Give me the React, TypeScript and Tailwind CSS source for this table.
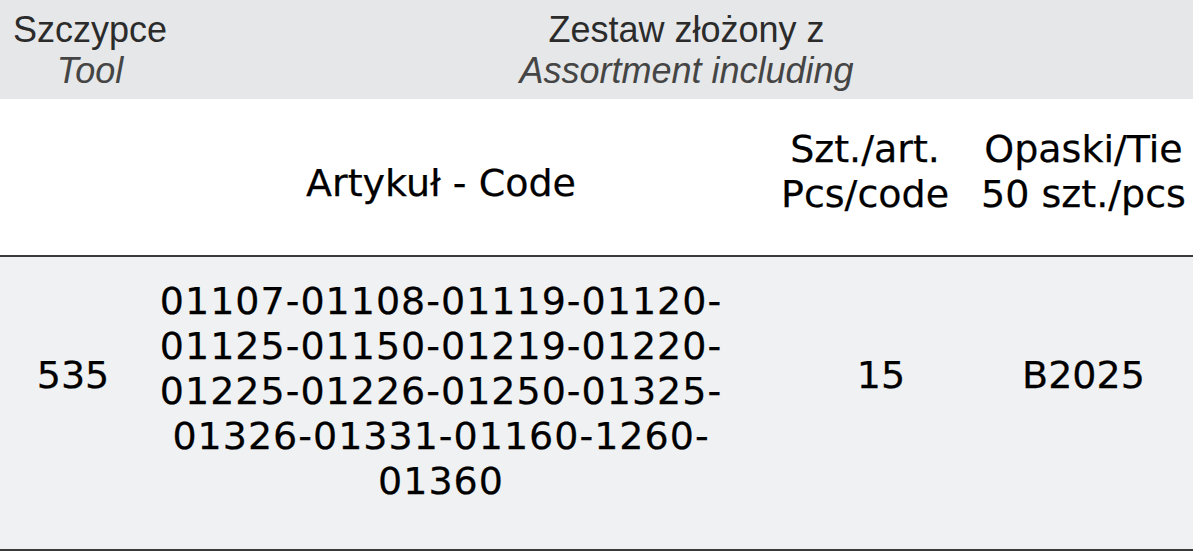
const codeLines = [
  '01107-01108-01119-01120-',
  '01125-01150-01219-01220-',
  '01225-01226-01250-01325-',
  '01326-01331-01160-1260-',
  '01360',
];

const verdana = "font-['DejaVu_Sans',Verdana,sans-serif]";

export default function App() {
  return (
    <div className="w-[1196px] h-[552px] bg-white overflow-hidden">
      <div className="w-[1193px]">
        {/* top band */}
        <div className="h-[99px] bg-[#e6e7e8] flex pt-[9px] font-['Liberation_Sans',Arial,sans-serif] text-[36px] leading-[41px]">
          <div className="w-[180px] flex flex-col items-center">
            <span className="text-[#2b2b2b]">Szczypce</span>
            <span className="italic text-[#454545]">Tool</span>
          </div>
          <div className="flex-1 flex flex-col items-center">
            <span className="text-[#2b2b2b]">Zestaw złożony z</span>
            <span className="italic text-[#454545]">Assortment including</span>
          </div>
        </div>

        {/* column headings */}
        <div
          className={`h-[158px] grid grid-cols-[146px_590px_238px_219px] border-b-2 border-[#3a3a3a] text-[38px] leading-[45px] text-black [-webkit-text-stroke:0.25px_black] ${verdana}`}
        >
          <div />
          <div className="pt-[62px] text-center">Artykuł - Code</div>
          <div className="pt-[28px] pl-[20px] text-center whitespace-nowrap">
            <div>Szt./art.</div>
            <div>Pcs/code</div>
          </div>
          <div className="pt-[28px] text-center whitespace-nowrap">
            <div>Opaski/Tie</div>
            <div>50 szt./pcs</div>
          </div>
        </div>

        {/* data row */}
        <div
          className={`h-[294px] bg-[#f0f1f2] grid grid-cols-[146px_590px_238px_219px] border-b-2 border-[#3a3a3a] text-[38px] leading-[45px] text-black [-webkit-text-stroke:0.25px_black] ${verdana}`}
        >
          <div className="pt-[96px] text-center">535</div>
          <div className="pt-[22px] text-center tracking-[1px]">
            {codeLines.map((line) => (
              <div key={line}>{line}</div>
            ))}
          </div>
          <div className="pt-[96px] pl-[52px] text-center">15</div>
          <div className="pt-[96px] text-center">B2025</div>
        </div>
      </div>
    </div>
  );
}
